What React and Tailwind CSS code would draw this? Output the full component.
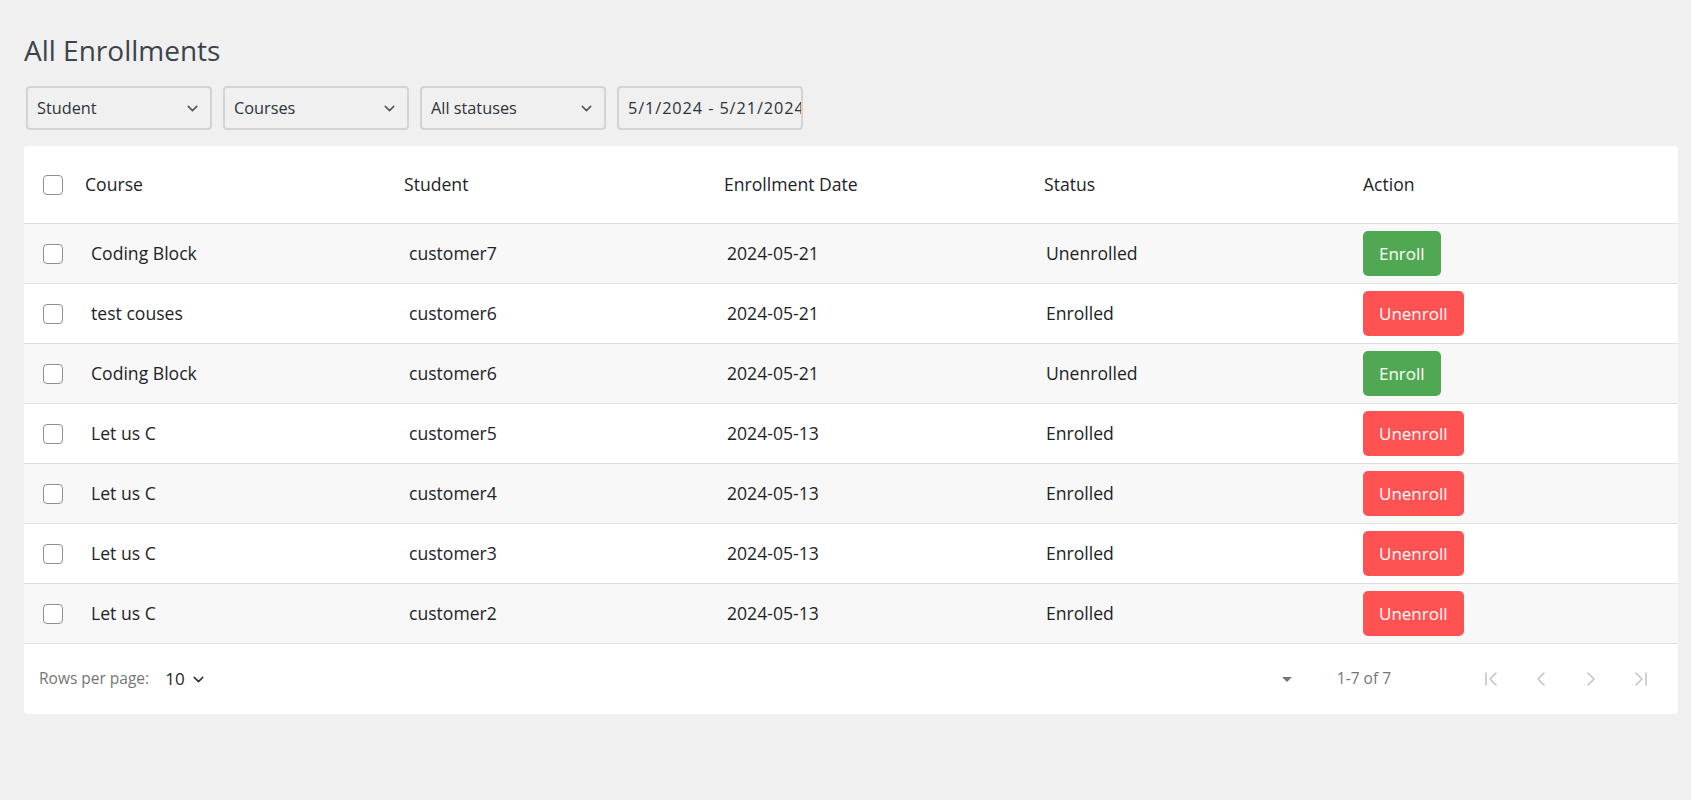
import { ChevronDown, ChevronFirst, ChevronLast, ChevronLeft, ChevronRight } from "lucide-react";

const rows = [
  { course: "Coding Block", student: "customer7", date: "2024-05-21", status: "Unenrolled" },
  { course: "test couses", student: "customer6", date: "2024-05-21", status: "Enrolled" },
  { course: "Coding Block", student: "customer6", date: "2024-05-21", status: "Unenrolled" },
  { course: "Let us C", student: "customer5", date: "2024-05-13", status: "Enrolled" },
  { course: "Let us C", student: "customer4", date: "2024-05-13", status: "Enrolled" },
  { course: "Let us C", student: "customer3", date: "2024-05-13", status: "Enrolled" },
  { course: "Let us C", student: "customer2", date: "2024-05-13", status: "Enrolled" },
];

const grid = "grid grid-cols-[61px_319px_320px_320px_319px_1fr] items-center";

function Checkbox() {
  return <span className="block w-[20px] h-[20px] rounded-[4px] border border-[#8c8f94] bg-white" />;
}

function Select({ label }) {
  return (
    <div className="w-[186px] h-[44px] flex items-center justify-between pl-[9px] pr-[9px] border-2 border-[#d3d3d4] rounded-[4px] bg-[#f0f0f1] text-[16.3px] text-[#2c3338]">
      <span>{label}</span>
      <ChevronDown className="w-[17px] h-[17px] text-[#50575e]" strokeWidth={2.2} />
    </div>
  );
}

export default function App() {
  return (
    <div className="min-h-screen bg-[#f0f0f1] pl-[24px] pr-[13px] pt-[30px] font-['Open_Sans','Liberation_Sans',sans-serif]">
      <h1 className="text-[28px] leading-[40px] text-[#3c434a] font-normal">All Enrollments</h1>

      {/* Filters */}
      <div className="mt-[16px] flex gap-[11px] pl-[2px]">
        <Select label="Student" />
        <Select label="Courses" />
        <Select label="All statuses" />
        <div className="w-[186px] h-[44px] flex items-center pl-[9px] border-2 border-[#d3d3d4] rounded-[4px] bg-[#f0f0f1] text-[16.3px] tracking-[0.9px] text-[#2c3338] overflow-hidden whitespace-nowrap">
          5/1/2024 - 5/21/2024
        </div>
      </div>

      {/* Table card */}
      <div className="mt-[16px] bg-white rounded-[4px] overflow-hidden text-[17.6px] text-[#1d2327]">
        <div className={`${grid} h-[78px] border-b border-[#e0e0e0]`}>
          <div className="pl-[19px]"><Checkbox /></div>
          <div>Course</div>
          <div>Student</div>
          <div>Enrollment Date</div>
          <div>Status</div>
          <div>Action</div>
        </div>

        {rows.map((r, i) => {
          const enrolled = r.status === "Enrolled";
          return (
            <div
              key={i}
              className={`${grid} h-[60px] border-b border-[#e0e0e0] ${i % 2 === 0 ? "bg-[#f8f8f8]" : "bg-white"}`}
            >
              <div className="pl-[19px]"><Checkbox /></div>
              <div className="pl-[6px]">{r.course}</div>
              <div className="pl-[5px]">{r.student}</div>
              <div className="pl-[3px]">{r.date}</div>
              <div className="pl-[2px]">{r.status}</div>
              <div>
                {enrolled ? (
                  <button className="h-[45px] px-[16px] rounded-[5px] bg-[#ff5252] text-white text-[17px]">Unenroll</button>
                ) : (
                  <button className="h-[45px] px-[16px] rounded-[5px] bg-[#51a852] text-white text-[17px]">Enroll</button>
                )}
              </div>
            </div>
          );
        })}

        {/* Footer */}
        <div className="h-[70px] flex items-center pl-[15px] pr-[25px]">
          <span className="text-[15.5px] text-[#757575]">Rows per page:</span>
          <span className="ml-[16px] flex items-center gap-[5px] text-[17px] text-[#1d2327]">
            10
            <ChevronDown className="w-[17px] h-[17px] text-[#333]" strokeWidth={2.2} />
          </span>
          <div className="ml-auto flex items-center">
            <svg viewBox="0 0 24 24" className="w-[24px] h-[24px] fill-[#757575]">
              <path d="M7 10l5 5 5-5z" />
            </svg>
            <span className="ml-[38px] text-[15.5px] text-[#757575]">1-7 of 7</span>
            <div className="ml-[88px] flex items-center gap-[26px] text-[#c4c4c4]">
              <ChevronFirst className="w-[24px] h-[24px]" strokeWidth={1.6} />
              <ChevronLeft className="w-[24px] h-[24px]" strokeWidth={1.6} />
              <ChevronRight className="w-[24px] h-[24px]" strokeWidth={1.6} />
              <ChevronLast className="w-[24px] h-[24px]" strokeWidth={1.6} />
            </div>
          </div>
        </div>
      </div>
    </div>
  );
}
